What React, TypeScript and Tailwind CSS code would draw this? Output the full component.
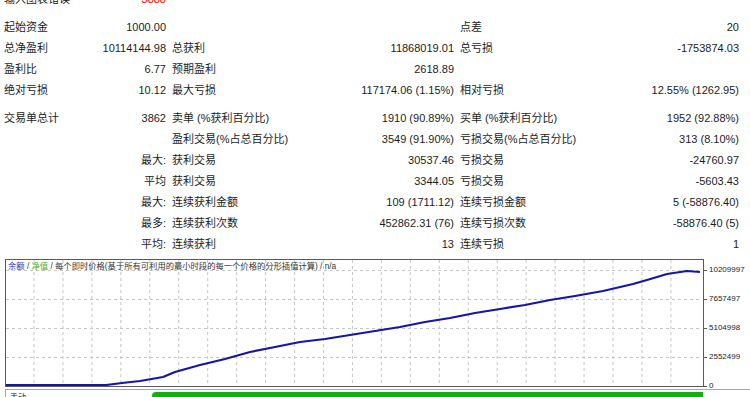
type Row = [string, string, string, string, string, string];

const topRows: Row[] = [
  ["起始资金", "1000.00", "", "", "点差", "20"],
  ["总净盈利", "10114144.98", "总获利", "11868019.01", "总亏损", "-1753874.03"],
  ["盈利比", "6.77", "预期盈利", "2618.89", "", ""],
  ["绝对亏损", "10.12", "最大亏损", "117174.06 (1.15%)", "相对亏损", "12.55% (1262.95)"],
];

const tradeRows: Row[] = [
  ["交易单总计", "3862", "卖单 (%获利百分比)", "1910 (90.89%)", "买单 (%获利百分比)", "1952 (92.88%)"],
  ["", "", "盈利交易(%占总百分比)", "3549 (91.90%)", "亏损交易(%占总百分比)", "313 (8.10%)"],
  ["", "最大:", "获利交易", "30537.46", "亏损交易", "-24760.97"],
  ["", "平均", "获利交易", "3344.05", "亏损交易", "-5603.43"],
  ["", "最大:", "连续获利金额", "109 (1711.12)", "连续亏损金额", "5 (-58876.40)"],
  ["", "最多:", "连续获利次数", "452862.31 (76)", "连续亏损次数", "-58876.40 (5)"],
  ["", "平均:", "连续获利", "13", "连续亏损", "1"],
];

// equity curve, page coordinates
const curve: [number, number][] = [
  [6, 385], [106, 385], [122, 383], [140, 381], [163, 377], [175, 372], [200, 365],
  [225, 359], [250, 352], [275, 347], [300, 342], [325, 339], [350, 335], [375, 331],
  [400, 327], [425, 322], [450, 318], [475, 313], [500, 309], [525, 305], [550, 300],
  [575, 296], [603, 291], [633, 284], [647, 280], [667, 274], [687, 271], [700, 272],
];

const axis = [
  { top: 11, label: "10209997" },
  { top: 40, label: "7657497" },
  { top: 69, label: "5104998" },
  { top: 98, label: "2552499" },
  { top: 127, label: "0" },
];

function StatRow({ r }: { r: Row }) {
  return (
    <div className="grid h-[21px] grid-cols-[162px_282px_279px] gap-x-[6px] leading-[21px] whitespace-nowrap">
      <div className="flex justify-between">
        <span>{r[0]}</span>
        <span>{r[1]}</span>
      </div>
      <div className="flex justify-between">
        <span>{r[2]}</span>
        <span>{r[3]}</span>
      </div>
      <div className="flex justify-between">
        <span>{r[4]}</span>
        <span>{r[5]}</span>
      </div>
    </div>
  );
}

function Chart() {
  const vlines = Array.from({ length: 23 }, (_, k) => 34 + k * 28.95);
  const hlines = [270, 299, 328, 357];
  return (
    <div className="mt-[4px] flex">
      <div className="relative ml-[5px] h-[128px] w-[699px] border border-[#5a5a5a] bg-white">
        <svg width="697" height="126" className="absolute left-0 top-0">
          <g transform="translate(-6,-260)">
            {vlines.map((x) => (
              <line key={x} x1={x} x2={x} y1={260} y2={386} stroke="#c4c4c4" strokeDasharray="3 3" />
            ))}
            {hlines.map((y) => (
              <line key={y} x1={6} x2={702} y1={y + 0.5} y2={y + 0.5} stroke="#c4c4c4" strokeDasharray="3 3" />
            ))}
            <polyline
              points={curve.map((p) => p.join(",")).join(" ")}
              fill="none"
              stroke="#1515a6"
              strokeWidth="2.2"
              strokeLinejoin="round"
            />
          </g>
        </svg>
        <div className="relative pl-[2px] pt-[1px] text-[8.3px] leading-[10px] whitespace-nowrap text-[#333]">
          <span className="text-[#3434c8]">余额</span>
          <span> / </span>
          <span className="text-[#2fb52f]">净值</span>
          <span> / 每个即时价格(基于所有可利用的最小时段的每一个价格的分形插值计算) / n/a</span>
        </div>
      </div>
      <div className="relative h-[128px] flex-1">
        {axis.map((a) => (
          <div key={a.label} className="absolute left-0 flex -translate-y-1/2 items-center" style={{ top: a.top }}>
            <div className="h-px w-[3px] bg-[#5a5a5a]" />
            <span className="ml-[2px] text-[8px] leading-[10px] text-[#222]">{a.label}</span>
          </div>
        ))}
      </div>
    </div>
  );
}

export default function App() {
  return (
    <div
      className="h-[397px] w-[750px] overflow-hidden bg-white text-[11px] text-[#1c1c1c]"
      style={{ fontFamily: '"Liberation Sans", "Noto Sans CJK SC", sans-serif' }}
    >
      <div className="-mt-[11px] pl-[4px]">
        <div className="grid h-[21px] grid-cols-[162px_282px_279px] gap-x-[6px] leading-[21px]">
          <div className="flex justify-between">
            <span>输入图表错误</span>
            <span className="text-[#ff0000]">3888</span>
          </div>
        </div>
        <div className="mt-[7px]">
          {topRows.map((r, i) => (
            <StatRow key={i} r={r} />
          ))}
        </div>
        <div className="mt-[7px]">
          {tradeRows.map((r, i) => (
            <StatRow key={i} r={r} />
          ))}
        </div>
      </div>
      <Chart />
      <div className="ml-[5px] mt-[2px] h-[20px] border-l border-t border-[#a8a8a8]">
        <div className="flex">
          <span className="w-[20px] pl-[4px] pt-[3px] text-[8px] leading-[10px]">手动</span>
          <div className="ml-[126px] mt-[2px] h-[10px] w-[551px] rounded-tl-[4px] bg-[#12b012]" />
        </div>
      </div>
    </div>
  );
}
